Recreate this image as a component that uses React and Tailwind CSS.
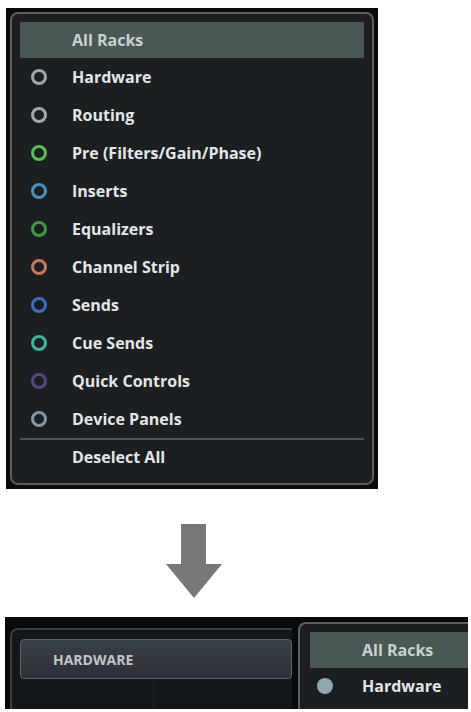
const font = { fontFamily: '"Open Sans", "Liberation Sans", sans-serif' };

const racks = [
  { label: 'Hardware', ring: 'border-[#9aa7ad]' },
  { label: 'Routing', ring: 'border-[#a3a7ab]' },
  { label: 'Pre (Filters/Gain/Phase)', ring: 'border-[#55c157]' },
  { label: 'Inserts', ring: 'border-[#4b92bb]' },
  { label: 'Equalizers', ring: 'border-[#3f9a43]' },
  { label: 'Channel Strip', ring: 'border-[#c27a5c]' },
  { label: 'Sends', ring: 'border-[#3c6fbe]' },
  { label: 'Cue Sends', ring: 'border-[#3cb598]' },
  { label: 'Quick Controls', ring: 'border-[#574682]' },
  { label: 'Device Panels', ring: 'border-[#8796a5]' },
];

function RackRow({ label, ring }) {
  return (
    <div className="flex h-[38px] items-center">
      <span className={`ml-[11px] h-[16px] w-[16px] rounded-full border-[3px] ${ring}`} />
      <span className="ml-[25px] text-[16px] font-bold text-[#e4e6e6]">{label}</span>
    </div>
  );
}

function RackMenu() {
  return (
    <div className="ml-[6px] mt-[8px] w-[372px] bg-[#0b0c0d] p-[4px]">
      <div className="rounded-[8px] border-2 border-[#595e61] bg-[#1b1f22] px-[8px] pb-[9px] pt-[8px]">
        <div className="flex h-[36px] items-center bg-[#4b5755] pl-[52px] text-[16px] font-bold text-[#c9d2cf]">
          All Racks
        </div>
        {racks.map((r) => (
          <RackRow key={r.label} {...r} />
        ))}
        <div className="h-[2px] bg-[#4f5457]" />
        <div className="flex h-[34px] items-center pl-[52px] text-[16px] font-bold text-[#e4e6e6]">
          Deselect All
        </div>
      </div>
    </div>
  );
}

function DownArrow() {
  return (
    <div className="h-[128px] pl-[166px] pt-[35px]">
      <svg width="56" height="74" viewBox="0 0 56 74">
        <path d="M15 0 H40 V40 H56 L28 74 L0 40 H15 Z" fill="#777878" />
      </svg>
    </div>
  );
}

function RackStrip() {
  return (
    <div className="ml-[5px] flex h-[92px] w-[463px] bg-[#08090a] pl-[5px] pt-[5px]">
      <div className="mt-[6px] flex w-[282px] flex-col overflow-hidden rounded-tl-[8px] border-l-2 border-t-2 border-[#3a3f44] bg-[#13171a]">
        <div className="ml-[8px] mt-[9px] flex h-[40px] items-center rounded-[4px] border border-[#5c6268] bg-gradient-to-b from-[#3b4149] to-[#2b3036] pl-[32px] text-[14px] font-bold text-[#c2c6ca]">
          HARDWARE
        </div>
        <div className="flex flex-1">
          <div className="w-[142px] border-r border-[#1f2428]" />
        </div>
      </div>
      <div className="ml-[6px] flex flex-1 flex-col rounded-tl-[8px] border-l-2 border-t-2 border-[#5a5f63] bg-[#1b1f22] pl-[10px] pt-[8px]">
        <div className="flex h-[36px] items-center bg-[#4b5755] pl-[52px] text-[16px] font-bold text-[#c9d2cf]">
          All Racks
        </div>
        <div className="flex h-[36px] items-center">
          <span className="ml-[7px] h-[16px] w-[16px] rounded-full bg-[#8fa7b2]" />
          <span className="ml-[29px] text-[16px] font-bold text-[#e4e6e6]">Hardware</span>
        </div>
      </div>
    </div>
  );
}

export default function App() {
  return (
    <div className="h-[712px] w-[471px] overflow-hidden bg-white" style={font}>
      <RackMenu />
      <DownArrow />
      <RackStrip />
    </div>
  );
}
